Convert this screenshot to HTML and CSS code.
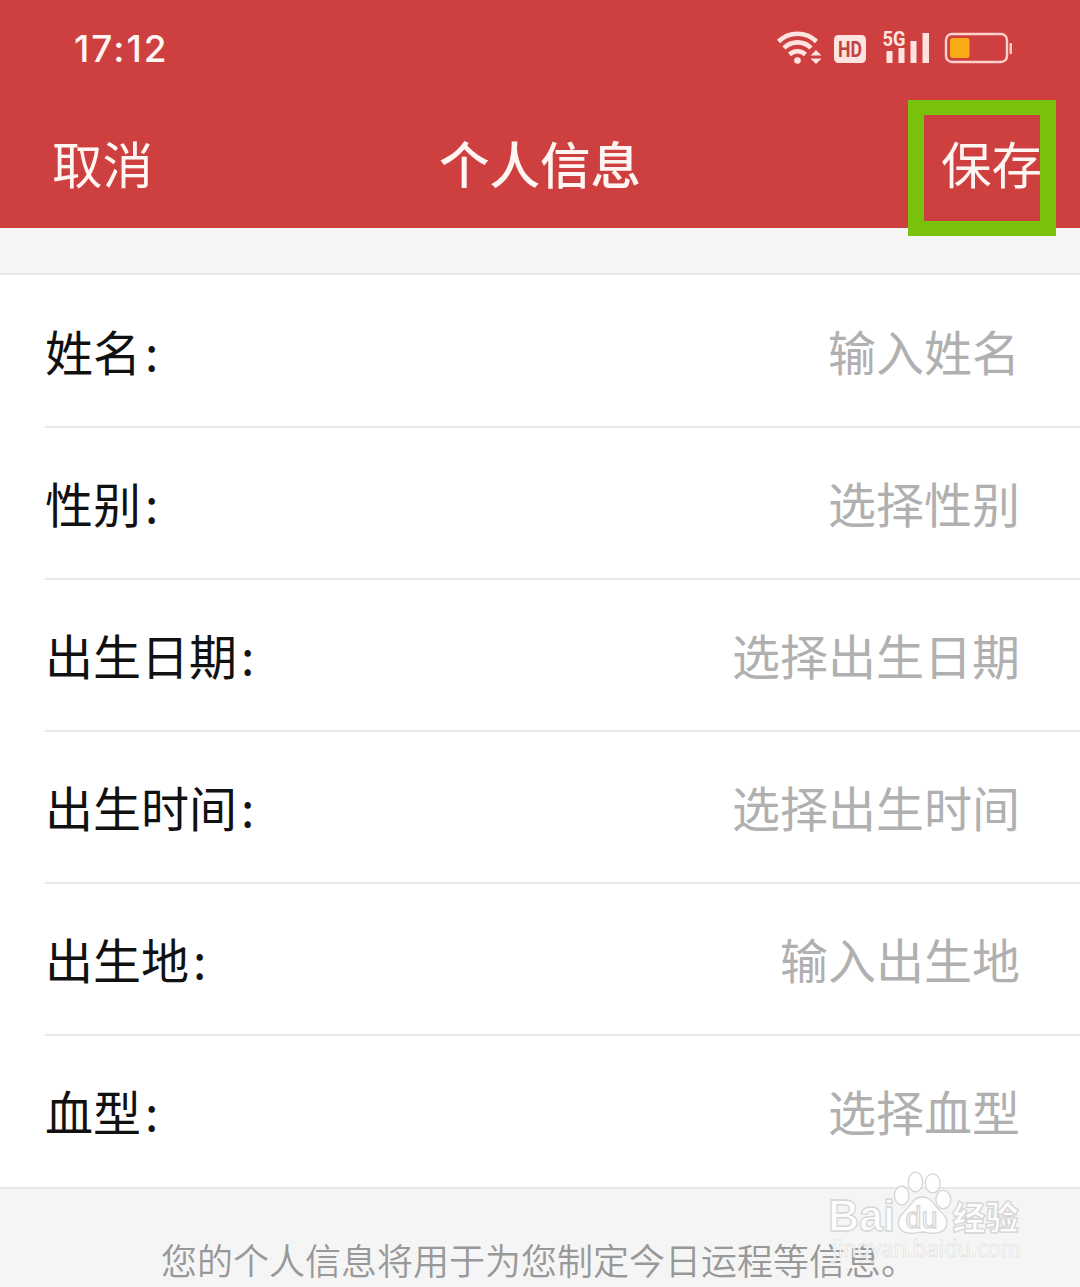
FILE: index.html
```
<!DOCTYPE html>
<html lang="zh-CN">
<head>
  <meta charset="UTF-8">
  <title>个人信息</title>
  <meta name="viewport" content="width=device-width, initial-scale=1.0">
  <link rel="stylesheet" href="styles.css">
</head>
<body>
  <header class="header">
    <div class="status-bar">
      <span class="time">17:12</span>
      <svg class="status-icons" width="270" height="60" viewBox="0 0 270 60">
        <!-- wifi -->
        <g fill="none" stroke="#ffe3e0" stroke-width="4.6">
          <path d="M18.500 21.500A27 27 0 0 1 56.500 21.500"/>
          <path d="M24 28A19 19 0 0 1 51 28"/>
          <path d="M29.500 34.500A11.500 11.500 0 0 1 45.500 34.500"/>
        </g>
        <circle cx="37.500" cy="40.500" r="3.300" fill="#ffe3e0"/>
        <path d="M50.500 35.500l5.500-5.500 5.500 5.500zM50.500 38.500l5.500 5.500 5.500-5.500z" fill="#ffe3e0"/>
        <!-- hd -->
        <rect x="74" y="15" width="32" height="28" rx="4.500" fill="#ffe3e0"/>
        <text class="hd" x="90" y="36.500" text-anchor="middle" textLength="24" lengthAdjust="spacingAndGlyphs">HD</text>
        <!-- signal -->
        <text class="net" x="122.500" y="26" textLength="23" lengthAdjust="spacingAndGlyphs">5G</text>
        <path d="M126.500 31h6v12h-6zM138.500 28h6v15h-6zM150.500 21h6v22h-6zM162.500 13h6.500v30h-6.500z" fill="#ffe3e0"/>
        <!-- battery -->
        <rect x="186" y="14" width="61" height="28" rx="6" fill="none" stroke="#ffd0cc" stroke-width="2.400"/>
        <rect x="190" y="18" width="19.500" height="20" rx="3" fill="#faa919"/>
        <rect x="249.500" y="23" width="2.500" height="11" rx="1" fill="#ffd0cc"/>
      </svg>
    </div>
    <div class="nav">
      <span class="nav-btn">取消</span>
      <h1 class="title">个人信息</h1>
      <span class="nav-btn save">保存</span>
    </div>
    <div class="highlight"></div>
  </header>

  <main class="list">
    <div class="row"><span class="label">姓名<i class="colon">:</i></span><span class="value">输入姓名</span></div>
    <div class="row"><span class="label">性别<i class="colon">:</i></span><span class="value">选择性别</span></div>
    <div class="row"><span class="label">出生日期<i class="colon">:</i></span><span class="value">选择出生日期</span></div>
    <div class="row"><span class="label">出生时间<i class="colon">:</i></span><span class="value">选择出生时间</span></div>
    <div class="row"><span class="label">出生地<i class="colon">:</i></span><span class="value">输入出生地</span></div>
    <div class="row"><span class="label">血型<i class="colon">:</i></span><span class="value">选择血型</span></div>
  </main>

  <footer class="footer">
    <p class="hint">您的个人信息将用于为您制定今日运程等信息。</p>
    <svg class="watermark" width="210" height="100" viewBox="0 0 210 100">
      <g class="wm">
        <text class="wm-logo" x="6" y="60" textLength="67" lengthAdjust="spacingAndGlyphs">Bai</text>
        <ellipse cx="79.700" cy="24.500" rx="7.300" ry="9.500"/>
        <ellipse cx="93.500" cy="11" rx="7.300" ry="9.800"/>
        <ellipse cx="110.700" cy="12.300" rx="7.500" ry="9.500"/>
        <ellipse cx="121.300" cy="28.500" rx="7.500" ry="9.200"/>
        <path d="M100.500 26C91 26 90 34 82 41C73 49 75 60 86 62C93 63 96 61 100.500 61C105 61 108 63 115 62C127 60 128 48 119 41C111 34 110 26 100.500 26Z"/>
        <text class="wm-du" x="83.500" y="57" textLength="32" lengthAdjust="spacingAndGlyphs">du</text>
        <text class="wm-cn" x="130.500" y="58.500" textLength="66" lengthAdjust="spacingAndGlyphs">经验</text>
        <text class="wm-url" x="10" y="86" textLength="189" lengthAdjust="spacingAndGlyphs">jingyan.baidu.com</text>
      </g>
    </svg>
  </footer>
</body>
</html>
```
FILE: styles.css
```
* {
  box-sizing: border-box;
}
body {
  margin: 0;
  height: 1287px;
  overflow: hidden;
  display: flex;
  flex-direction: column;
  background: #f5f5f5;
  font-family: "Noto Sans CJK SC", sans-serif;
}

.header {
  position: relative;
  height: 228px;
  background: #cd403f;
  color: #fff5f2;
}
.status-bar {
  display: flex;
  justify-content: space-between;
  height: 100px;
  padding: 20px 50px 0 74px;
}
.time {
  font-family: Inter, sans-serif;
  font-size: 37px;
  font-weight: 500;
  line-height: 58px;
  letter-spacing: 2px;
}
.hd {
  font: bold 22px Roboto, sans-serif;
  fill: #c04441;
}
.net {
  font: bold 20px Roboto, sans-serif;
  fill: #ffe3e0;
}
.nav {
  display: grid;
  grid-template-columns: 1fr auto 1fr;
  align-items: center;
  height: 125px;
  padding: 0 38px 0 52px;
}
.nav-btn, .title {
  font-size: 50.5px;
  font-weight: 400;
  line-height: 125px;
}
.title {
  margin: 0 0 0 -14px;
  font-weight: 500;
}
.save {
  justify-self: end;
}
/* green frame over the save button */
.highlight {
  position: absolute;
  left: 908px;
  top: 100px;
  width: 148px;
  height: 136px;
  border: 16px solid #78c20e;
  border-top-width: 15px;
  border-bottom-width: 15px;
}

.list {
  margin-top: 45px;
  padding-left: 45px;
  background: #fff;
  border-top: 2px solid #e7e7e7;
  border-bottom: 2px solid #e7e7e7;
}
.row {
  display: flex;
  justify-content: space-between;
  height: 152px;
  padding-right: 60px;
  border-bottom: 2px solid #e7e7e7;
  font-size: 48px;
  line-height: 148px;
}
.row:first-child {
  height: 153px;
  line-height: 150px;
}
.row:last-child {
  height: 151px;
  border-bottom: none;
}
.label {
  color: #111;
}
.colon {
  margin-left: 4px;
  font-style: normal;
}
.value {
  color: #b0b0b0;
}

.footer {
  position: relative;
  flex: 1;
}
.hint {
  margin: 0;
  padding: 43px 0 0 161px;
  font-size: 36px;
  line-height: 54px;
  font-weight: 350;
  white-space: nowrap;
  color: #989898;
}
.watermark {
  position: absolute;
  left: 822px;
  top: -18px;
}
.wm {
  fill: #fff;
  fill-opacity: 0.85;
  stroke: #d5d5d5;
  stroke-width: 1.3;
}
.wm-logo {
  font: bold 45px "Liberation Sans", sans-serif;
}
.wm-du {
  font: 29px "Liberation Sans", sans-serif;
}
.wm-cn {
  font: 900 33px "Noto Sans CJK SC", sans-serif;
}
.wm-url {
  font: 23px "Noto Sans", sans-serif;
  stroke-width: 0.5;
}
```
